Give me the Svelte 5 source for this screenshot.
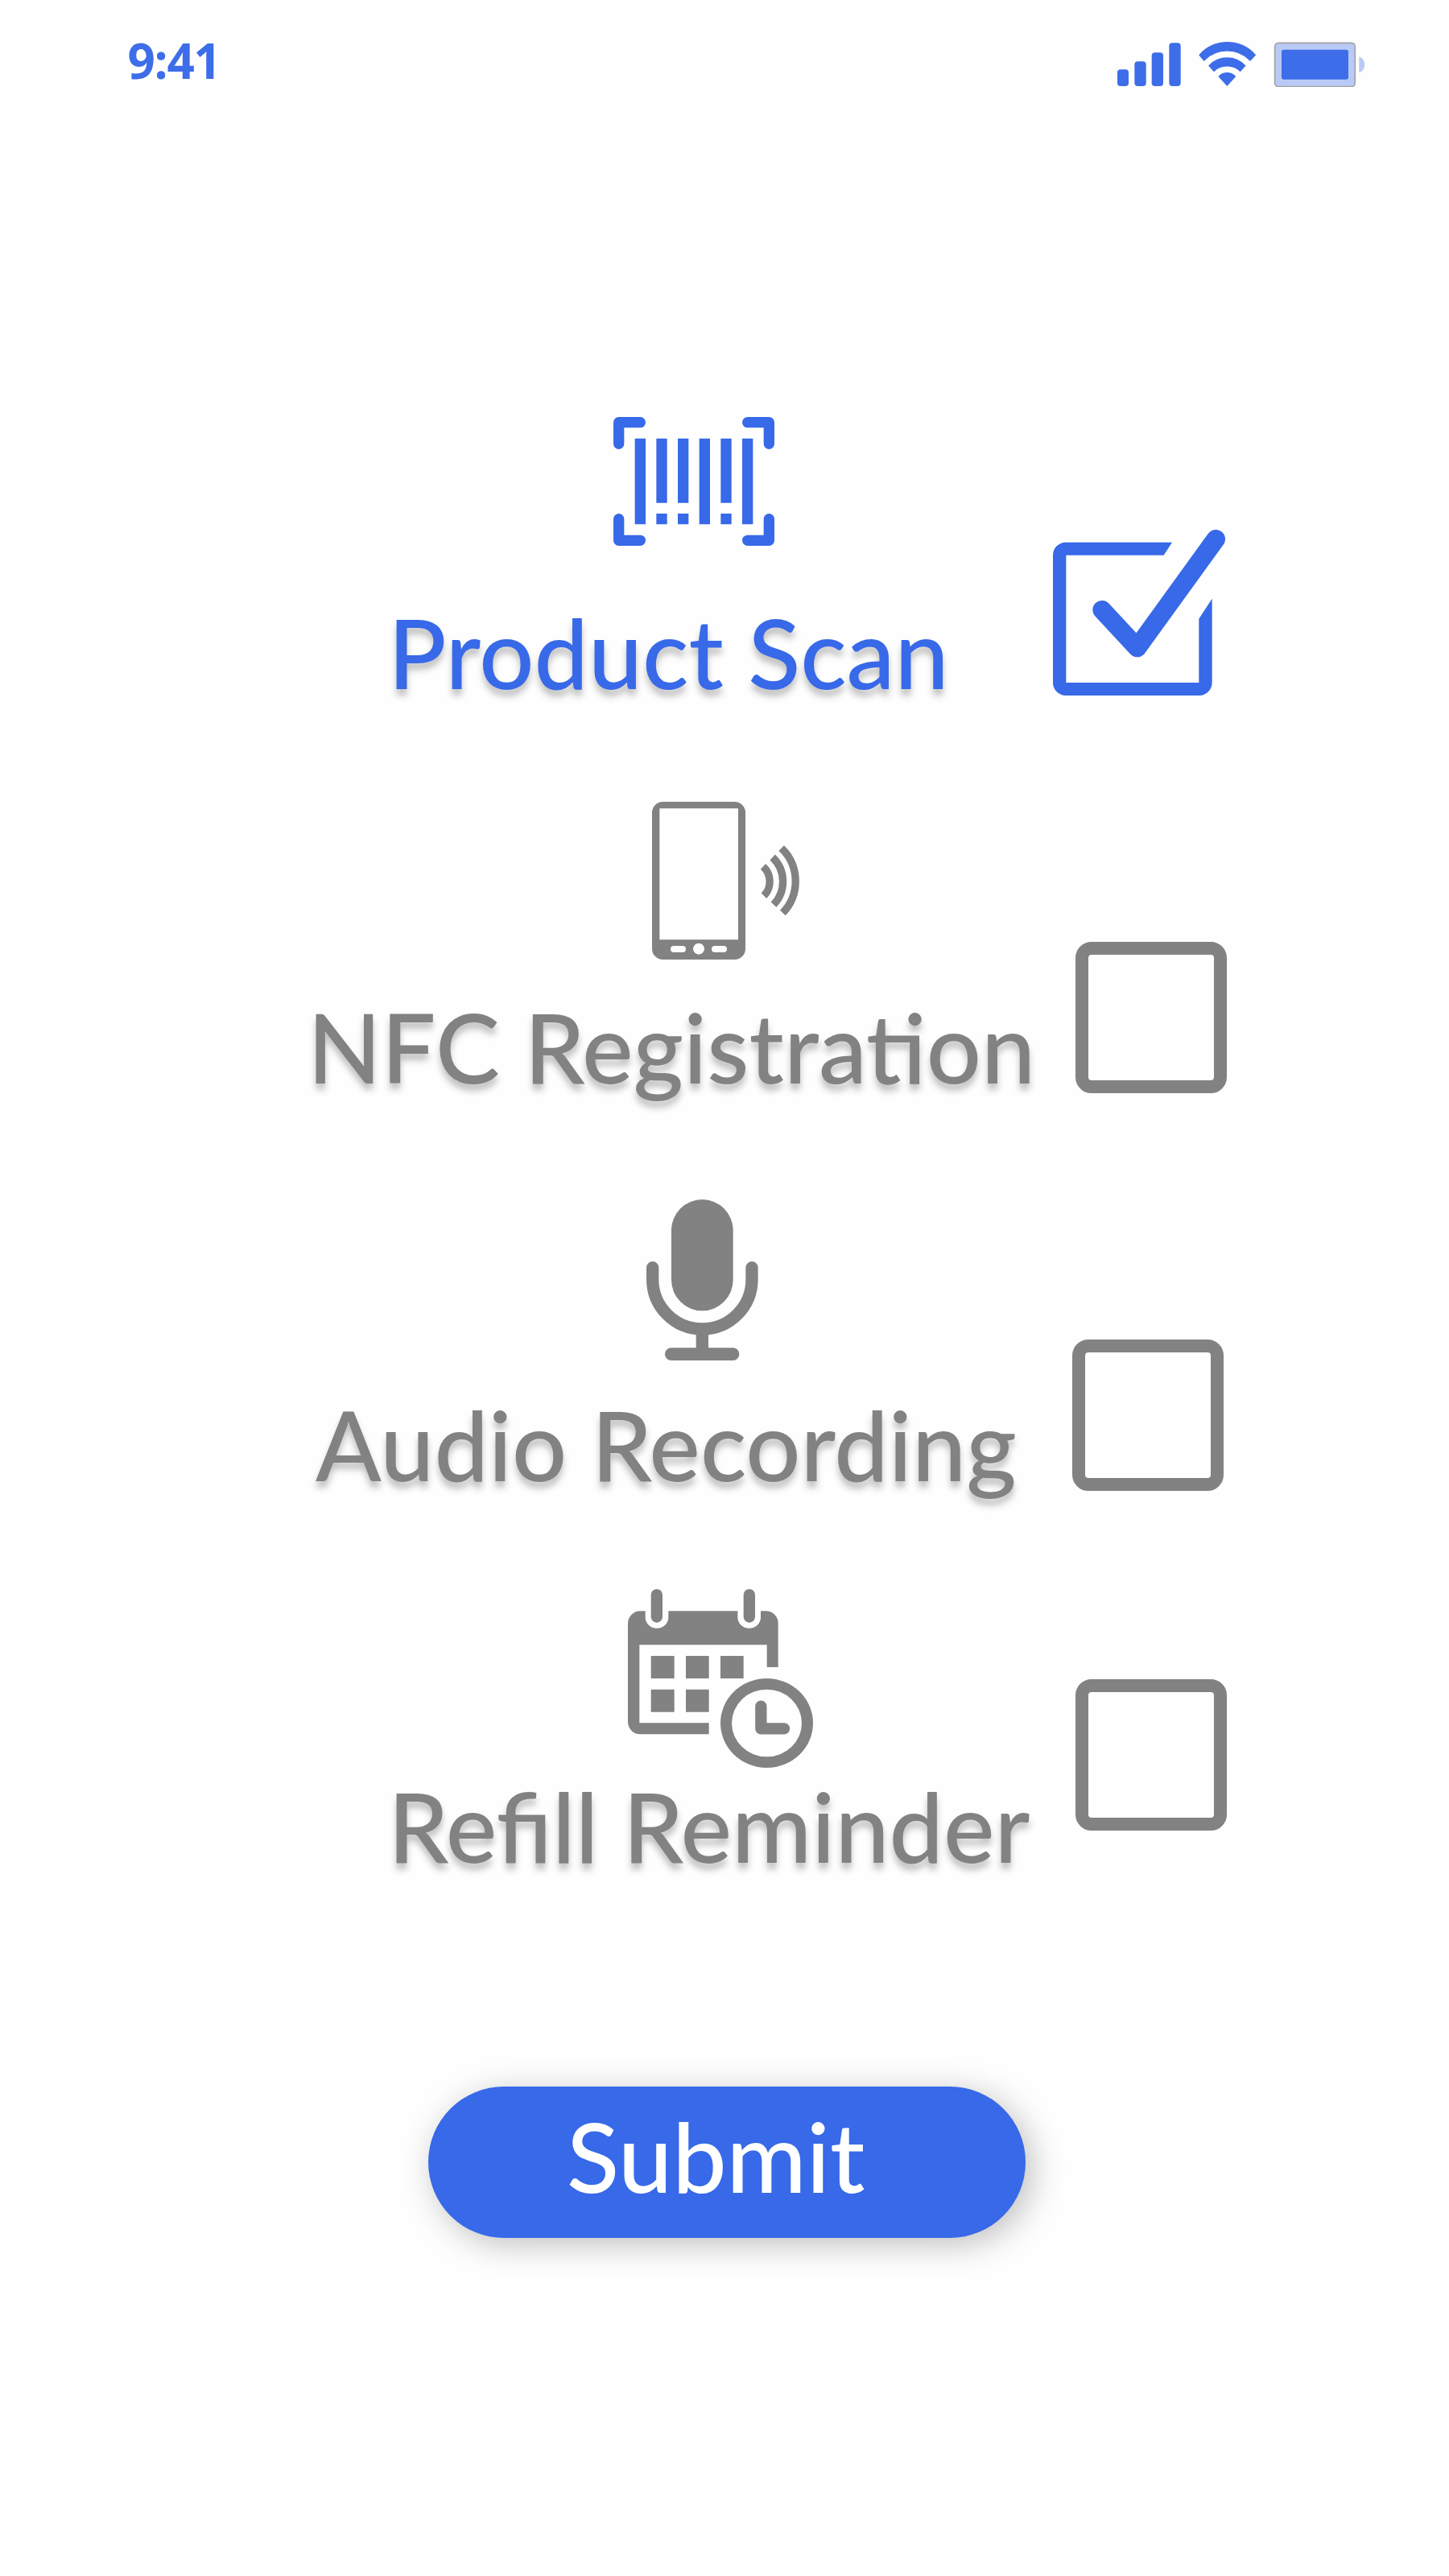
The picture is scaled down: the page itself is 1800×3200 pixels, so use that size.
<script>
  const options = [
    { id: 'scan', label: 'Product Scan', checked: true },
    { id: 'nfc', label: 'NFC Registration', checked: false },
    { id: 'audio', label: 'Audio Recording', checked: false },
    { id: 'refill', label: 'Refill Reminder', checked: false }
  ];
</script>

<div class="screen">
  <header class="status">
    <span class="time">9:41</span>
    <svg class="indicators" viewBox="84 65 921 170" aria-hidden="true">
      <rect x="84" y="168" width="42" height="62" rx="12" />
      <rect x="148" y="138" width="43" height="92" rx="12" />
      <rect x="212" y="105" width="43" height="125" rx="12" />
      <rect x="277" y="69" width="43" height="161" rx="12" />
      <path class="wifi" d="M390 114A139 139 0 0 1 598 114L579 134A120 120 0 0 0 407 134ZM426 154A92 92 0 0 1 560 154L542 174A71 71 0 0 0 444 174ZM463 194A42 42 0 0 1 523 194L493 227Z" />
      <rect class="case" x="671" y="69" width="299" height="163" rx="13" />
      <rect x="696" y="94" width="249" height="111" rx="8" />
      <path class="nub" d="M985 120A32 32 0 0 1 985 180Z" />
    </svg>
  </header>

  <main>
    {#each options as option (option.id)}
      <section class="option {option.id}" class:checked={option.checked}>
        <div class="body">
          {#if option.id === 'scan'}
            <svg class="icon" viewBox="0 0 15 12" aria-hidden="true">
              <path class="corners" d="M.5 2.5V.5H2.5M12.5 .5H14.5V2.5M14.5 9.5V11.5H12.5M2.5 11.5H.5V9.5" />
              <path d="M2 2h1v8H2zM4 2h1v6H4zM4 9h1v1H4zM6 2h1v6H6zM6 9h1v1H6zM8 2h1v8H8zM10 2h1v6h-1zM10 9h1v1h-1zM12 2h1v8h-1z" />
            </svg>
          {:else if option.id === 'nfc'}
            <svg class="icon" viewBox="60 48 549 588" aria-hidden="true">
              <path fill-rule="evenodd" d="M100 48H368A40 40 0 0 1 408 88V596A40 40 0 0 1 368 636H100A40 40 0 0 1 60 596V88A40 40 0 0 1 100 48ZM88 73V562H381V73ZM141 585A12 12 0 0 0 141 609H174A12 12 0 0 0 174 585ZM294 585A12 12 0 0 0 294 609H327A12 12 0 0 0 327 585ZM213 596A21 21 0 0 0 255 596A21 21 0 0 0 213 596Z" />
              <path class="waves" d="M474 289A76 76 0 0 1 477 398M509 255A124 124 0 0 1 513 431M542 221A170 170 0 0 1 547 462" />
            </svg>
          {:else if option.id === 'audio'}
            <svg class="icon" viewBox="68 60 416 600" aria-hidden="true">
              <rect x="161" y="60" width="230" height="415" rx="115" />
              <path class="cradle" d="M91 314V358A185 185 0 0 0 461 358V314" />
              <path d="M253 555h46v65h-46z" />
              <rect x="137" y="613" width="277" height="47" rx="23.5" />
            </svg>
          {:else}
            <svg class="icon" viewBox="60 72 690 666" aria-hidden="true">
              <path d="M106 154H125V177A43 41 0 0 0 211 177V154H469V177A43 41 0 0 0 555 177V154H575A45 45 0 0 1 620 199V363H578V280H103V571H362V613H106A46 46 0 0 1 60 568V199A46 46 0 0 1 106 154Z" />
              <rect x="146" y="72" width="43" height="125" rx="21.5" />
              <rect x="491" y="72" width="43" height="125" rx="21.5" />
              <path d="M146 321h87v84h-87zM276 321h86v84h-86zM405 321h86v84h-86zM146 446h87v84h-87zM276 446h86v84h-86z" />
              <path fill-rule="evenodd" d="M405 571.5A172.5 166.5 0 0 1 750 571.5A172.5 166.5 0 0 1 405 571.5ZM447 571.5A130.5 125.5 0 0 0 708 571.5A130.5 125.5 0 0 0 447 571.5Z" />
              <path class="hands" d="M556 509V592H642" />
            </svg>
          {/if}
          <span class="label">{option.label}</span>
        </div>
        {#if option.checked}
          <svg class="tick" viewBox="54 54 642 618" role="img" aria-label="Selected">
            <path d="M498 101L467 149H103V624H598V386L647 311V624A48 48 0 0 1 599 672H102A48 48 0 0 1 54 624V149A48 48 0 0 1 102 101Z" />
            <path class="mark" d="M237 353L368 494L661 89" />
          </svg>
        {:else}
          <span class="box"></span>
        {/if}
      </section>
    {/each}
    <button class="submit"><span>Submit</span></button>
  </main>
</div>

<style>
  :global(body) { margin: 0; background: #fefefe; }
  .screen {
    width: 1800px;
    height: 3200px;
    overflow: hidden;
    background: #fefefe;
    font-family: Lato, sans-serif;
    font-weight: 500;
  }
  .status {
    box-sizing: border-box;
    height: 150px;
    padding: 35px 105px 0 158.5px;
    display: flex;
    justify-content: space-between;
    align-items: flex-start;
    color: #3d6de8;
  }
  .time { font: 700 60px/80px 'Open Sans', sans-serif; letter-spacing: -1.2px; }
  .indicators { width: 307px; height: 56.67px; margin: 16.67px 0 0; fill: currentColor; }
  .wifi { stroke: currentColor; stroke-width: 4; stroke-linejoin: round; }
  .case { fill: #b9caf6; stroke: #a2a3a2; stroke-width: 5; }
  .nub { fill: #b9caf6; }

  main { padding-top: 368px; }
  .option { display: flex; align-items: flex-start; color: #828282; }
  .option.checked { color: #3769e8; }
  .body { display: flex; flex-direction: column; align-items: flex-start; }
  .icon { display: block; fill: currentColor; overflow: visible; flex: none; }
  .icon path[class], .mark { fill: none; stroke: currentColor; }
  .corners { stroke-width: 1; stroke-linecap: round; stroke-linejoin: round; }
  .waves { stroke-width: 28; }
  .cradle { stroke-width: 46; stroke-linecap: round; }
  .hands { stroke-width: 43; stroke-linecap: round; stroke-linejoin: round; }
  .mark { stroke-width: 70; stroke-linecap: round; stroke-linejoin: round; }
  .label {
    font-size: 120px;
    line-height: 166px;
    white-space: nowrap;
    text-shadow: 0 8px 8px rgba(0, 0, 0, 0.25);
  }
  .tick { width: 214px; height: 206px; fill: currentColor; }
  .box { box-sizing: border-box; width: 188px; height: 188px; border: 16px solid currentColor; border-radius: 20px; }

  .scan { height: 478px; padding-left: 482px; }
  .scan .body { width: 826px; }
  .scan .icon { width: 200px; height: 160px; margin: 0 0 49px 280px; }
  .scan .tick { margin-top: 140px; }
  .nfc { height: 494px; padding-left: 382px; }
  .nfc .body { width: 954px; }
  .nfc .icon { width: 183px; height: 196px; margin: 0 0 25px 428px; }
  .nfc .box { margin-top: 174px; }
  .audio { height: 484px; padding-left: 392px; }
  .audio .body { width: 940px; }
  .audio .icon { width: 138.67px; height: 200px; margin: 0 0 21px 410.67px; }
  .audio .box { margin-top: 174px; }
  .refill { height: 618px; padding-left: 482px; }
  .refill .body { width: 854px; }
  .refill .icon { width: 230px; height: 222px; margin: 0 0 -11px 298px; }
  .refill .box { margin-top: 112px; }

  .submit {
    box-sizing: border-box;
    width: 742px;
    height: 188px;
    margin: 0 0 0 532px;
    padding: 3px 0 0 172px;
    display: flex;
    align-items: flex-start;
    border: 0;
    border-radius: 94px;
    background: #3769e8;
    box-shadow: 8px 8px 40px rgba(0, 0, 0, 0.25);
    color: #fff;
    font: 500 120px/166px Lato, sans-serif;
  }
</style>
